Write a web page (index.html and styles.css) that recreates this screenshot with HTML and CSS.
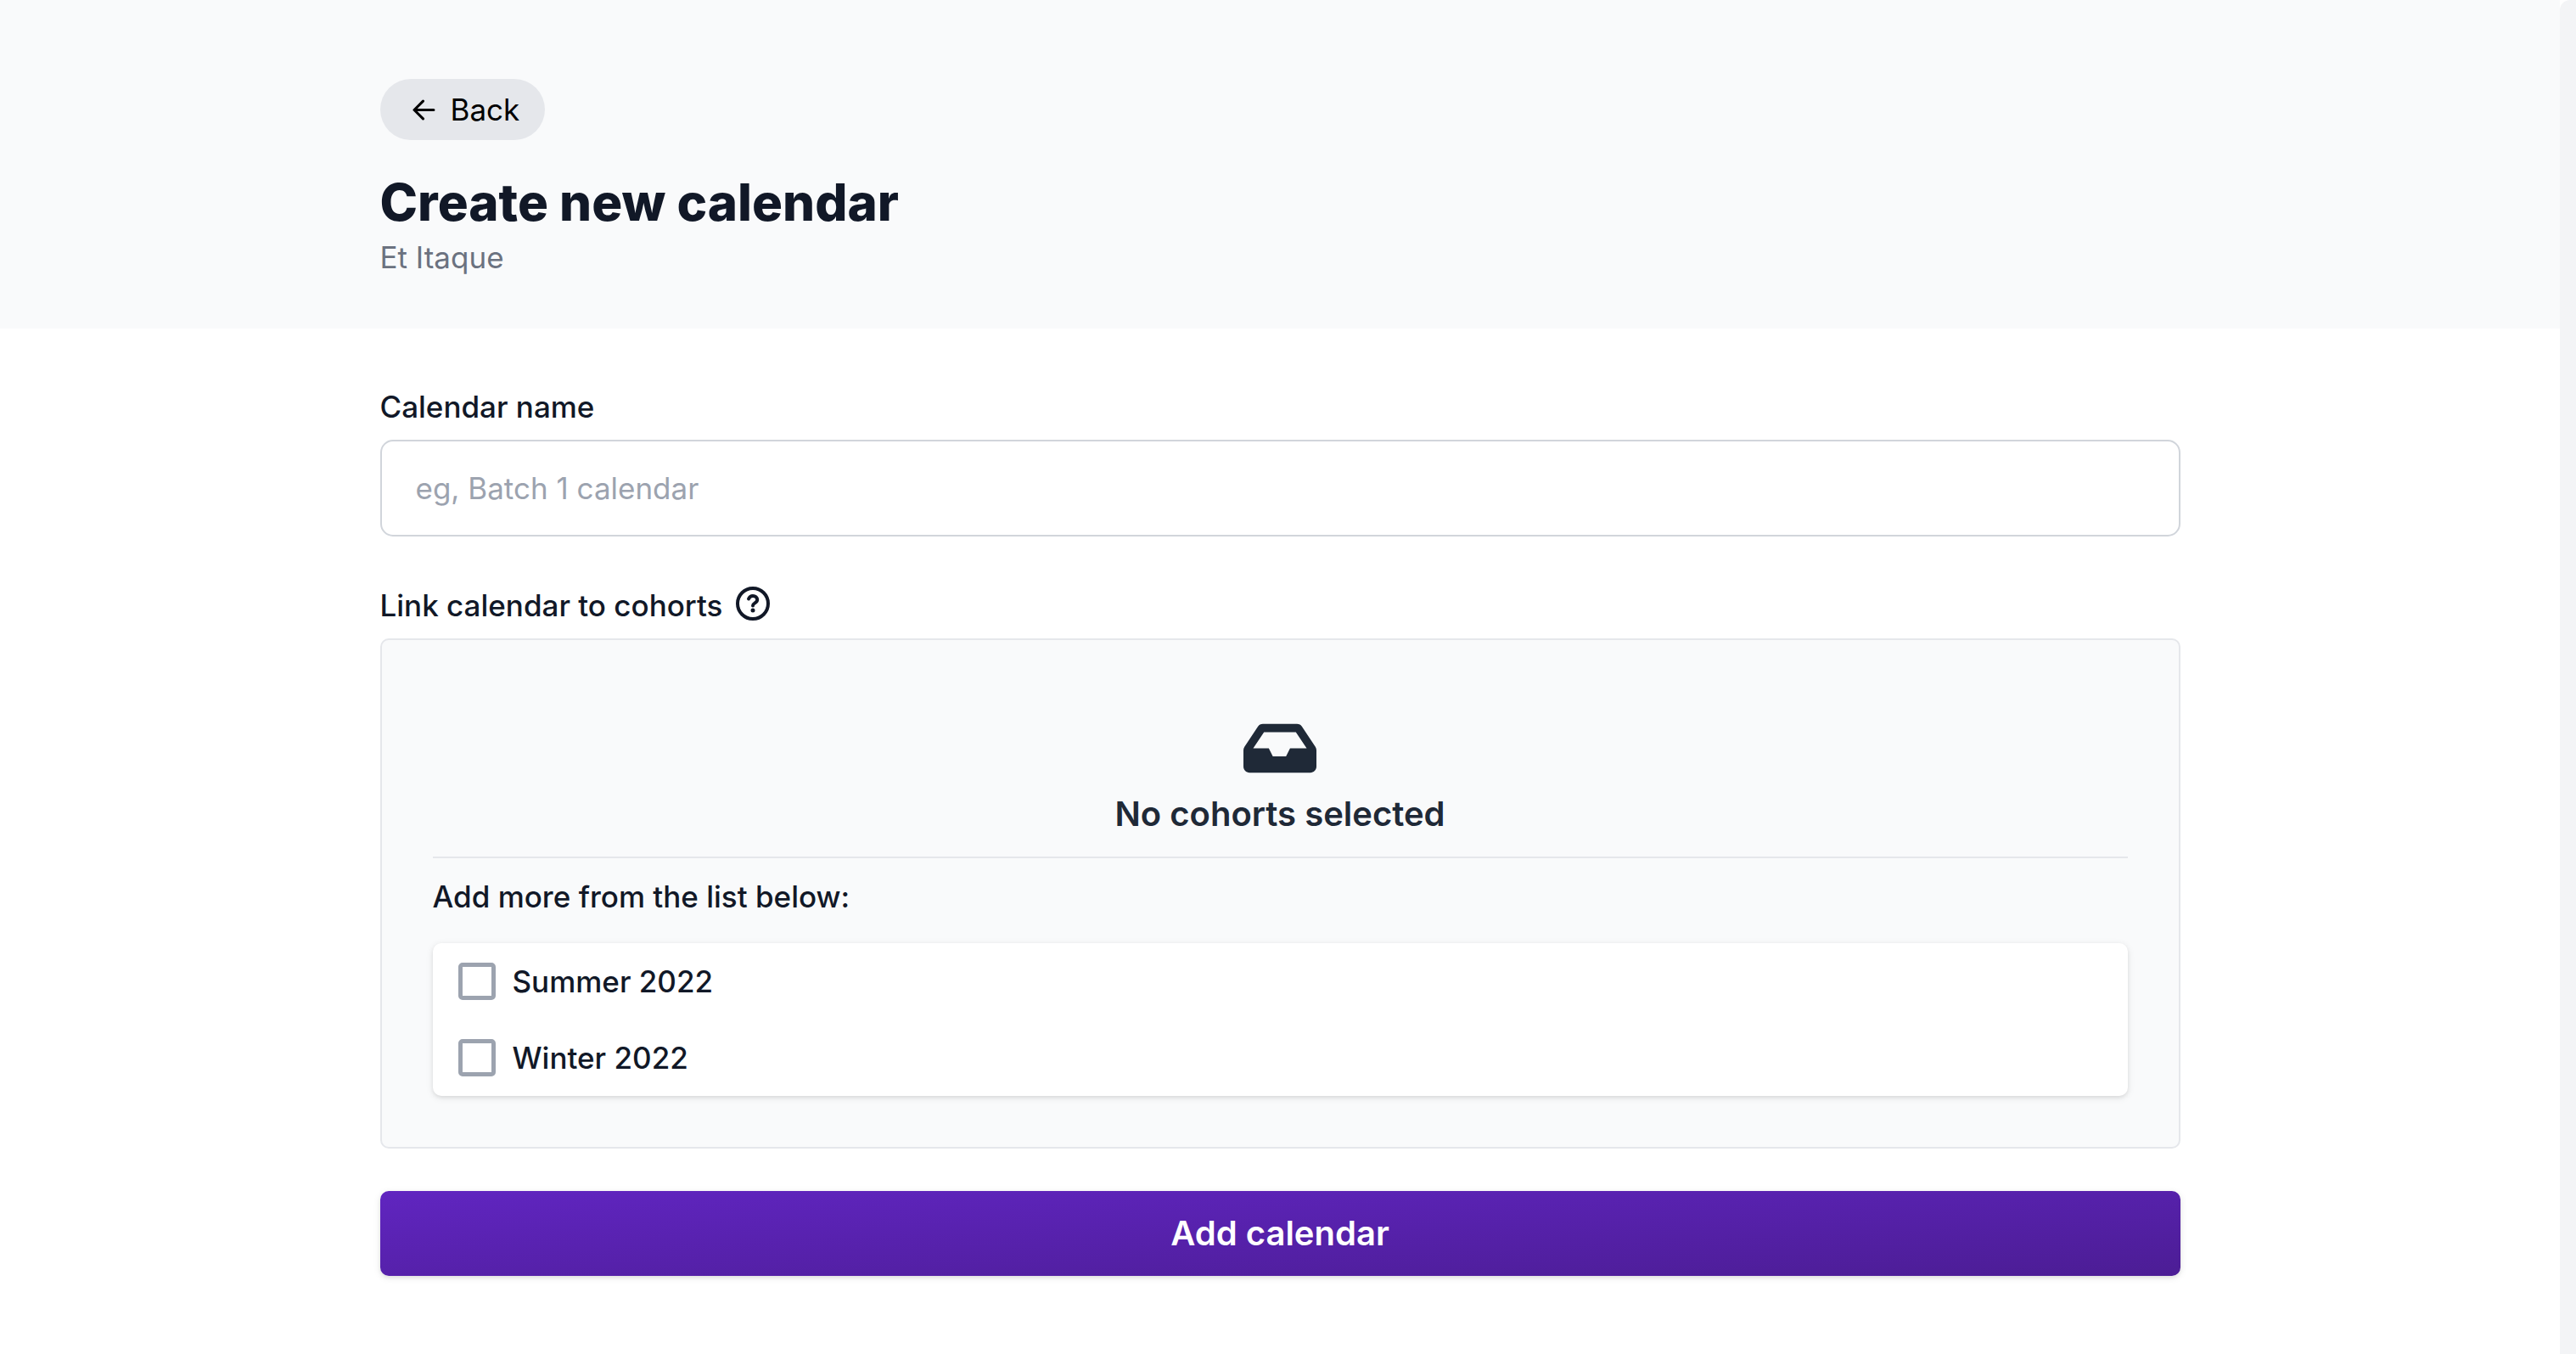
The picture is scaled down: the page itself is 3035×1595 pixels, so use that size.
FILE: index.html
```html
<!DOCTYPE html>
<html lang="en">
<head>
  <meta charset="utf-8">
  <meta name="viewport" content="width=device-width, initial-scale=1">
  <title>Create new calendar</title>
  <link rel="stylesheet" href="styles.css">
</head>
<body>
  <div class="page">
    <header class="page-header">
      <div class="container">
        <button type="button" class="back-button">
          <svg class="back-icon" viewBox="0 0 26 24" fill="none" stroke="currentColor" stroke-width="3" stroke-linecap="round" stroke-linejoin="round" aria-hidden="true"><path d="M24 12H2M12 2L2 12l10 10"/></svg>
          <span>Back</span>
        </button>
        <h1 class="page-title">Create new calendar</h1>
        <p class="page-subtitle">Et Itaque</p>
      </div>
    </header>
    <main class="container form-area">
      <form class="calendar-form">
        <div class="field">
          <label class="field-label" for="calendar-name">Calendar name</label>
          <input class="text-input" id="calendar-name" type="text" placeholder="eg, Batch 1 calendar">
        </div>
        <div class="field" role="group" aria-labelledby="cohorts-label">
          <div class="field-label label-row">
            <span id="cohorts-label">Link calendar to cohorts</span>
            <svg class="help-icon" viewBox="0 0 40 40" fill="none" stroke="currentColor" stroke-width="4" stroke-linecap="round" stroke-linejoin="round" aria-hidden="true"><circle cx="20" cy="20" r="18"/><path d="M15 14.500C16 12 18 11 20 11c3 0 5.200 1.800 5.200 4.500 0 4-5.200 3.800-5.200 7"/><circle cx="20" cy="28" r="2.500" fill="currentColor" stroke="none"/></svg>
          </div>
          <div class="panel">
            <div class="empty-state">
              <svg class="inbox-icon" viewBox="0 0 576 512" fill="currentColor" aria-hidden="true"><path d="M567.938 243.908L462.250 85.374A48.003 48.003 0 0 0 422.311 64H153.689a48 48 0 0 0-39.938 21.374L8.062 243.908A47.994 47.994 0 0 0 0 270.533V400c0 26.510 21.490 48 48 48h480c26.510 0 48-21.490 48-48V270.533a47.994 47.994 0 0 0-8.062-26.625zM162.252 128h251.497l85.333 128H368l-32 64H232l-32-64H76.918l85.334-128z"/></svg>
              <p class="empty-text">No cohorts selected</p>
            </div>
            <p class="list-title">Add more from the list below:</p>
            <div class="cohort-list">
              <label class="cohort"><input class="checkbox" type="checkbox"><span>Summer 2022</span></label>
              <label class="cohort"><input class="checkbox" type="checkbox"><span>Winter 2022</span></label>
            </div>
          </div>
        </div>
        <button type="submit" class="submit-button">Add calendar</button>
      </form>
    </main>
  </div>
  <div class="scroll-rail" aria-hidden="true"></div>
</body>
</html>
```
FILE: styles.css
```css
* {
  box-sizing: border-box;
}

body {
  margin: 0;
  min-height: 100vh;
  display: flex;
  background: #ffffff;
  color: #111827;
  font-family: Inter, "Liberation Sans", sans-serif;
  font-size: 35px;
  line-height: 50px;
}

h1,
p {
  margin: 0;
}

button,
input {
  font: inherit;
}

.page {
  flex: 1;
  min-width: 0;
}

.scroll-rail {
  width: 19px;
  background: #f3f4f6;
  border-top-left-radius: 12px;
}

.container {
  max-width: 2241px;
  margin: 0 auto;
  padding: 0 60px;
}

.page-header {
  padding: 93px 0 59px;
  background: #f9fafb;
}

.back-button {
  display: flex;
  align-items: center;
  gap: 18px;
  height: 72px;
  padding: 0 30px 0 38px;
  border: 0;
  border-radius: 36px;
  background: #e5e7eb;
  color: #000000;
}

.back-icon {
  width: 27px;
  height: 25px;
}

.page-title {
  margin-top: 37px;
  font-size: 60px;
  line-height: 72px;
  font-weight: 800;
}

.page-subtitle {
  margin-top: 4px;
  color: #6b7280;
}

.form-area {
  padding-top: 67px;
  padding-bottom: 90px;
}

.field {
  display: flex;
  flex-direction: column;
  gap: 14px;
}

.field + .field {
  margin-top: 56px;
}

.field-label {
  font-weight: 500;
}

.label-row {
  display: flex;
  gap: 16px;
}

.help-icon {
  width: 40px;
  height: 40px;
  margin-top: 3px;
}

.text-input {
  width: 100%;
  padding: 30px 40px;
  border: 2px solid #d1d5db;
  border-radius: 15px;
  background: #ffffff;
  color: inherit;
  line-height: 50px;
}

.text-input::placeholder {
  color: #9ca3af;
  opacity: 1;
}

.panel {
  padding: 60px;
  border: 2px solid #e5e7eb;
  border-radius: 10px;
  background: #f9fafb;
}

.empty-state {
  display: flex;
  flex-direction: column;
  align-items: center;
  padding: 29px 0 20px;
  border-bottom: 2px solid #e5e7eb;
  color: #1f2937;
}

.inbox-icon {
  width: 86px;
  height: 77px;
}

.empty-text {
  margin-top: 9px;
  font-size: 40px;
  line-height: 60px;
  font-weight: 600;
}

.list-title {
  margin-top: 20px;
  font-weight: 500;
}

.cohort-list {
  margin-top: 30px;
  border-radius: 10px;
  background: #ffffff;
  box-shadow: 0 2px 8px rgba(0, 0, 0, 0.1), 0 2px 4px rgba(0, 0, 0, 0.06);
}

.cohort {
  display: flex;
  align-items: center;
  gap: 20px;
  padding: 20px 30px;
  font-weight: 500;
}

.checkbox {
  appearance: none;
  width: 44px;
  height: 44px;
  margin: 0;
  border: 5px solid #9ca3af;
  border-radius: 5px;
  background: #ffffff;
}

.submit-button {
  display: block;
  width: 100%;
  margin-top: 50px;
  padding: 20px;
  border: 0;
  border-radius: 10px;
  background: linear-gradient(to bottom right, #6025c0, #4c1d95);
  box-shadow: 0 2px 8px rgba(0, 0, 0, 0.1), 0 2px 4px rgba(0, 0, 0, 0.06);
  color: #ffffff;
  font-size: 40px;
  line-height: 60px;
  font-weight: 600;
}
```
